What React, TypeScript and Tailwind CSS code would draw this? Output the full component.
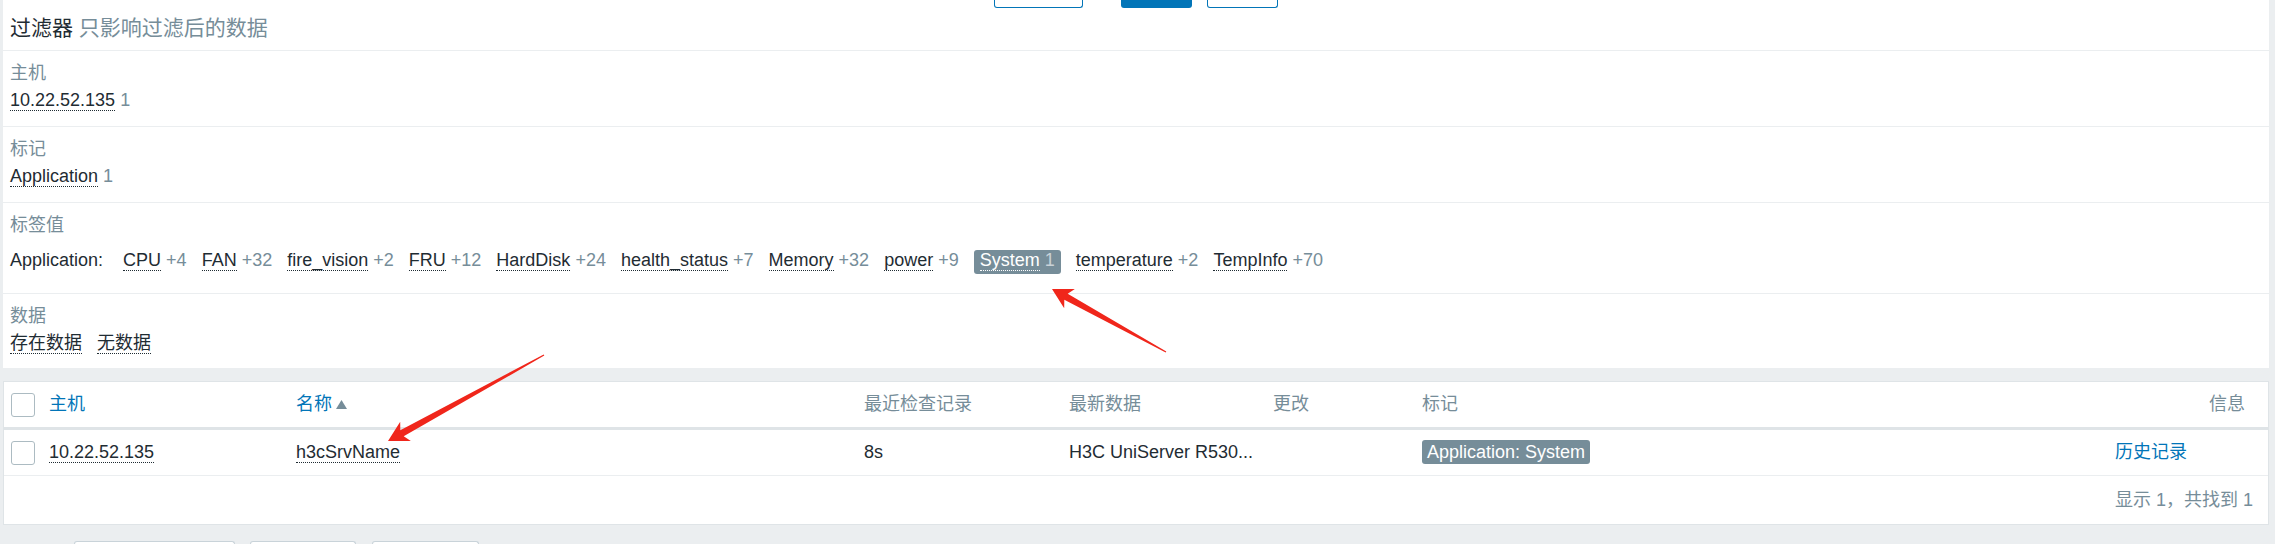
import React from 'react';

const tagValues: { name: string; count: string; active?: boolean }[] = [
  { name: 'CPU', count: '+4' },
  { name: 'FAN', count: '+32' },
  { name: 'fire_vision', count: '+2' },
  { name: 'FRU', count: '+12' },
  { name: 'HardDisk', count: '+24' },
  { name: 'health_status', count: '+7' },
  { name: 'Memory', count: '+32' },
  { name: 'power', count: '+9' },
  { name: 'System', count: '1', active: true },
  { name: 'temperature', count: '+2' },
  { name: 'TempInfo', count: '+70' },
];

// red annotation arrow, tip -> tail
function arrowPoints(tx: number, ty: number, sx: number, sy: number) {
  const hl = 20;
  const hw = 11;
  const sw = 3.5;
  const dx = sx - tx;
  const dy = sy - ty;
  const len = Math.hypot(dx, dy);
  const ux = dx / len;
  const uy = dy / len;
  const px = -uy;
  const py = ux;
  const bx = tx + ux * hl;
  const by = ty + uy * hl;
  const nx = tx + ux * (hl - 4);
  const ny = ty + uy * (hl - 4);
  const pts = [
    [tx, ty],
    [bx + px * hw, by + py * hw],
    [nx + px * sw, ny + py * sw],
    [sx + px * 0.6, sy + py * 0.6],
    [sx - px * 0.6, sy - py * 0.6],
    [nx - px * sw, ny - py * sw],
    [bx - px * hw, by - py * hw],
  ];
  return pts.map((p) => p.join(',')).join(' ');
}

const Checkbox = () => (
  <div className="h-[24px] w-[24px] rounded-[3px] border border-[#acbbc2] bg-white"></div>
);

export default function App() {
  return (
    <div className="relative h-[544px] overflow-hidden bg-[#ebeef0] pl-[3px] pr-[6px] font-['Liberation_Sans','Noto_Sans_CJK_SC',sans-serif] text-[18px] text-[#1f2c33]">
      {/* filter panel */}
      <div className="bg-white">
        <div className="flex h-[8px] justify-center">
          <div className="h-[8px] w-[89px] rounded-b-[3px] border-x border-b border-[#0275b8] bg-white"></div>
          <div className="ml-[38px] h-[8px] w-[71px] rounded-b-[3px] bg-[#0275b8]"></div>
          <div className="ml-[15px] h-[8px] w-[71px] rounded-b-[3px] border-x border-b border-[#0275b8] bg-white"></div>
        </div>
        <div className="px-[7px] pt-[4px] pb-[7px] text-[21px] leading-[31px]">
          过滤器 <span className="text-[#768d99]">只影响过滤后的数据</span>
        </div>

        <div className="border-t border-[#ebeef0] px-[7px] pt-[9px] pb-[12px] leading-[27px]">
          <div className="text-[#768d99]">主机</div>
          <div>
            <span className="border-b border-dotted border-[#1f2c33]">10.22.52.135</span>{' '}
            <span className="text-[#768d99]">1</span>
          </div>
        </div>

        <div className="border-t border-[#ebeef0] px-[7px] pt-[9px] pb-[12px] leading-[27px]">
          <div className="text-[#768d99]">标记</div>
          <div>
            <span className="border-b border-dotted border-[#1f2c33]">Application</span>{' '}
            <span className="text-[#768d99]">1</span>
          </div>
        </div>

        <div className="border-t border-[#ebeef0] px-[7px] pt-[9px] pb-[19px]">
          <div className="leading-[27px] text-[#768d99]">标签值</div>
          <div className="mt-[11px] flex h-[24px] items-start gap-[15px] leading-[20px]">
            <div className="mr-[5px]">Application:</div>
            {tagValues.map((t) =>
              t.active ? (
                <div key={t.name} className="h-[24px] rounded-[3px] bg-[#768d99] px-[6px] text-white">
                  <span className="border-b border-dotted border-white">{t.name}</span>{' '}
                  <span className="text-[#c9d2d8]">{t.count}</span>
                </div>
              ) : (
                <div key={t.name}>
                  <span className="border-b border-dotted border-[#1f2c33]">{t.name}</span>{' '}
                  <span className="text-[#768d99]">{t.count}</span>
                </div>
              )
            )}
          </div>
        </div>

        <div className="border-t border-[#ebeef0] px-[7px] pt-[9px] pb-[11px] leading-[27px]">
          <div className="text-[#768d99]">数据</div>
          <div className="flex gap-[15px]">
            <div>
              <span className="border-b border-dotted border-[#1f2c33]">存在数据</span>
            </div>
            <div>
              <span className="border-b border-dotted border-[#1f2c33]">无数据</span>
            </div>
          </div>
        </div>
      </div>

      {/* results table */}
      <div className="mt-[13px] border border-[#dfe4e7] bg-white">
        <div className="flex h-[48px] items-center border-b-[3px] border-[#dfe4e7] text-[#768d99]">
          <div className="w-[45px] pl-[7px]">
            <Checkbox />
          </div>
          <div className="w-[247px] text-[#0275b8]">主机</div>
          <div className="flex w-[568px] items-center text-[#0275b8]">
            名称
            <svg width="11" height="9" viewBox="0 0 11 9" className="ml-[4px]">
              <polygon points="5.5,0 11,9 0,9" fill="#768d99" />
            </svg>
          </div>
          <div className="w-[205px]">最近检查记录</div>
          <div className="w-[204px]">最新数据</div>
          <div className="w-[149px]">更改</div>
          <div className="w-[693px]">标记</div>
          <div className="flex-1 pr-[23px] text-right">信息</div>
        </div>

        <div className="flex h-[46px] items-center border-b border-[#ebeef0]">
          <div className="w-[45px] pl-[7px]">
            <Checkbox />
          </div>
          <div className="w-[247px]">
            <span className="border-b border-dotted border-[#1f2c33]">10.22.52.135</span>
          </div>
          <div className="w-[568px]">
            <span className="border-b border-dotted border-[#1f2c33]">h3cSrvName</span>
          </div>
          <div className="w-[205px]">8s</div>
          <div className="w-[204px] whitespace-nowrap">H3C UniServer R530...</div>
          <div className="w-[149px]"></div>
          <div className="w-[693px]">
            <span className="inline-block h-[24px] rounded-[3px] bg-[#768d99] px-[5px] leading-[24px] text-white">
              Application: System
            </span>
          </div>
          <div className="flex-1 text-[#0275b8]">历史记录</div>
        </div>

        <div className="flex h-[48px] items-center justify-end pr-[15px] text-[#768d99]">显示 1，共找到 1</div>
      </div>

      <div className="mt-[16px] flex pl-[71px]">
        <div className="h-[12px] w-[161px] rounded-t-[3px] border-x border-t border-[#c9d3d9] bg-white"></div>
        <div className="ml-[15px] h-[12px] w-[106px] rounded-t-[3px] border-x border-t border-[#c9d3d9] bg-white"></div>
        <div className="ml-[16px] h-[12px] w-[107px] rounded-t-[3px] border-x border-t border-[#c9d3d9] bg-white"></div>
      </div>

      {/* annotation arrows */}
      <svg className="pointer-events-none absolute top-0 left-0" width="2275" height="544" viewBox="0 0 2275 544">
        <polygon points={arrowPoints(1052, 289, 1166, 352)} fill="#f0261b" />
        <polygon points={arrowPoints(388, 441, 544, 355)} fill="#f0261b" />
      </svg>
    </div>
  );
}
